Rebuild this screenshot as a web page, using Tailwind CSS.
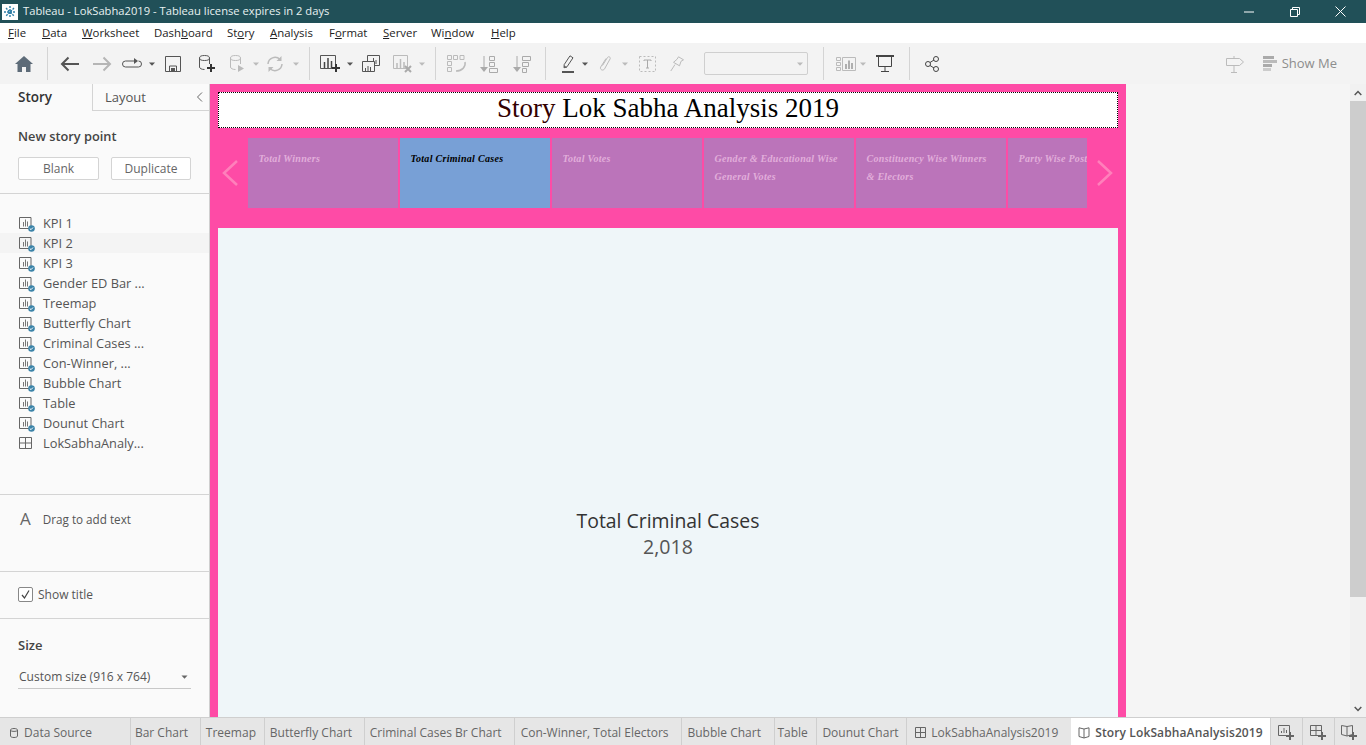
<!DOCTYPE html>
<html lang="en">
<head>
<meta charset="UTF-8" />
<title>Tableau - LokSabha2019</title>
<script src="https://cdn.jsdelivr.net/npm/@tailwindcss/browser@4"></script>
</head>
<body class="h-[745px] w-[1366px] overflow-hidden flex flex-col bg-white font-['Open_Sans',sans-serif] text-[#555]">

<!-- icons used more than once -->
<svg class="hidden">
  <symbol id="sheet" viewBox="0 0 16 16">
    <path d="M.5 1.500h11.500v11H.5z" fill="none" stroke="#666"/>
    <path d="M4.500 6v4.500M6.500 3.500v7M8.500 5.500v5" stroke="#777" fill="none"/>
    <circle cx="12.500" cy="12.500" r="3.300" fill="#3b83a8"/>
    <path d="M10.800 12.500l1.200 1.200 2-2.200" stroke="#fff" fill="none"/>
  </symbol>
  <symbol id="caret" viewBox="0 0 6 4"><path d="M0 .5h6L3 3.800z" fill="currentColor"/></symbol>
  <symbol id="caret-off" viewBox="0 0 6 4"><path d="M0 .5h6L3 3.800z" fill="#bbb"/></symbol>
</svg>

<!-- title bar -->
<div class="h-[23px] shrink-0 bg-[#215058] flex items-center text-white text-[11.2px]">
  <svg class="ml-[2px] w-[16px] h-[16px]" viewBox="0 0 16 16">
    <rect width="16" height="16" fill="#fff"/>
    <path d="M8 2v12M2 8h12M4 4l8 8M12 4l-8 8" stroke="#2f7fa8" stroke-width="1.400" stroke-dasharray="2 1"/>
  </svg>
  <span class="ml-[5px] text-[#e8f0f1]">Tableau - LokSabha2019 - Tableau license expires in 2 days</span>
  <div class="ml-auto flex items-center">
    <svg class="w-[10px] h-[10px] mr-[36px]" viewBox="0 0 10 10"><path d="M0 5h10" stroke="#fff"/></svg>
    <svg class="w-[10px] h-[10px] mr-[35px]" viewBox="0 0 10 10"><path d="M.5 2.500h7v7h-7zM2.500 2.500v-2h7v7h-2" fill="none" stroke="#fff"/></svg>
    <svg class="w-[11px] h-[11px] mr-[20px]" viewBox="0 0 11 11"><path d="M.5.500l10 10M10.500.500l-10 10" stroke="#fff"/></svg>
  </div>
</div>

<!-- menu bar -->
<div class="h-[20px] shrink-0 bg-white flex items-center pl-[8px] text-[11.4px] text-[#222]">
  <span class="w-[34px]"><u>F</u>ile</span>
  <span class="w-[40px]"><u>D</u>ata</span>
  <span class="w-[72px]"><u>W</u>orksheet</span>
  <span class="w-[73px]">Dash<u>b</u>oard</span>
  <span class="w-[43px]">St<u>o</u>ry</span>
  <span class="w-[59px]"><u>A</u>nalysis</span>
  <span class="w-[54px]">F<u>o</u>rmat</span>
  <span class="w-[48px]"><u>S</u>erver</span>
  <span class="w-[60px]">Wi<u>n</u>dow</span>
  <span><u>H</u>elp</span>
</div>

<!-- toolbar -->
<div class="h-[41px] shrink-0 bg-[#f3f3f3] flex items-center text-[#555]">
  <div class="w-[47px] flex justify-center">
    <svg class="w-[18px] h-[16px]" viewBox="0 0 18 16"><path d="M9 0L0 8h2.500v8h4.500v-5h4v5h4.500V8H18z" fill="#5d6b78"/></svg>
  </div>
  <div class="w-px h-[33px] bg-[#d4d4d4]"></div>
  <svg class="ml-[12px] w-[20px] h-[16px]" viewBox="0 0 20 16"><path d="M19 8H2M8.500 1.500L2 8l6.500 6.500" fill="none" stroke="#555" stroke-width="2"/></svg>
  <svg class="ml-[12px] w-[20px] h-[16px]" viewBox="0 0 20 16"><path d="M1 8h17M11.500 1.500L18 8l-6.500 6.500" fill="none" stroke="#b5b5b5" stroke-width="2"/></svg>
  <svg class="ml-[10px] w-[20px] h-[12px]" viewBox="0 0 20 12"><path d="M13 3H3.500a2.500 2.500 0 000 6h13a2.500 2.500 0 000-6" fill="none" stroke="#555"/><path d="M12 0l4 3-4 3z" fill="#555"/></svg>
  <svg class="ml-[7px] w-[6px] h-[4px]"><use href="#caret"/></svg>
  <svg class="ml-[10px] w-[16px] h-[16px]" viewBox="0 0 16 16"><path d="M.5.500h15v15H.5zM4.500 15.500V10h7v5.500" fill="none" stroke="#555"/><path d="M6 12h4v3H6z" fill="#555"/></svg>
  <svg class="ml-[17px] w-[18px] h-[18px]" viewBox="0 0 18 18"><ellipse cx="6.500" cy="3" rx="5" ry="2.500" fill="none" stroke="#555"/><path d="M1.500 3v9c0 1.400 2 2.500 5 2.500M11.500 3v6" fill="none" stroke="#555"/><path d="M13 9v8M9 13h8" stroke="#333" stroke-width="2"/></svg>
  <svg class="ml-[13px] w-[16px] h-[18px]" viewBox="0 0 16 18"><ellipse cx="6.500" cy="3" rx="5" ry="2.500" fill="none" stroke="#bbb"/><path d="M1.500 3v9c0 1.400 2 2.500 5 2.500M11.500 3v6" fill="none" stroke="#bbb"/><path d="M9 10l6 3.500L9 17z" fill="#bbb"/></svg>
  <svg class="ml-[8px] w-[6px] h-[4px]"><use href="#caret-off"/></svg>
  <svg class="ml-[7px] w-[18px] h-[16px]" viewBox="0 0 18 16"><path d="M2 8a7 7 0 0112-4.500M16 8a7 7 0 01-12 4.500" fill="none" stroke="#bbb" stroke-width="1.500"/><path d="M15.500 0v5h-5zM2.500 16v-5h5z" fill="#bbb"/></svg>
  <svg class="ml-[9px] w-[6px] h-[4px]"><use href="#caret-off"/></svg>
  <div class="ml-[10px] w-px h-[33px] bg-[#d4d4d4]"></div>
  <svg class="ml-[10px] w-[22px] h-[20px]" viewBox="0 0 22 20"><path d="M.5 1.500h15v13H.5z" fill="none" stroke="#555"/><path d="M4.500 8v6M8 4v10M11.500 7v7" stroke="#444" stroke-width="1.500"/><path d="M16 10v8M12 14h8" stroke="#333" stroke-width="2"/></svg>
  <svg class="ml-[5px] w-[6px] h-[4px]"><use href="#caret"/></svg>
  <svg class="ml-[9px] w-[18px] h-[17px]" viewBox="0 0 18 17"><path d="M5.500 .5h12v10h-12z" fill="#f3f3f3" stroke="#555"/><path d="M9 7v2M11.500 3v6M14 5v4" stroke="#555"/><path d="M.5 6.500h12v10H.5z" fill="#f3f3f3" stroke="#555"/><path d="M3.500 13v3M6 11v5M8.500 12v4" stroke="#555"/></svg>
  <svg class="ml-[13px] w-[20px] h-[18px]" viewBox="0 0 20 18"><path d="M.5 .5h14v13H.5z" fill="none" stroke="#bbb"/><path d="M4 8v5M7.500 4v9M11 7v6" stroke="#bbb" stroke-width="1.500"/><path d="M12 11l6 6M18 11l-6 6" stroke="#aaa" stroke-width="2"/></svg>
  <svg class="ml-[6px] w-[6px] h-[4px]"><use href="#caret-off"/></svg>
  <div class="ml-[10px] w-px h-[33px] bg-[#d4d4d4]"></div>
  <svg class="ml-[11px] w-[20px] h-[18px]" viewBox="0 0 20 18"><path d="M.5.500h4v4h-4zM6.500.500h4v4h-4zM.5 6.500h4v4h-4zM.5 12.500h4v4h-4zM13 .5h4v4h-4z" fill="none" stroke="#bbb"/><path d="M18 7c1 5-3 9-9 9" fill="none" stroke="#bbb" stroke-width="1.500"/></svg>
  <svg class="ml-[13px] w-[18px] h-[18px]" viewBox="0 0 18 18"><path d="M4 1v14" stroke="#aaa"/><path d="M0 12l4 5 4-5z" fill="#aaa"/><path d="M9.500 1.500h5v4h-5zM9.500 7.500h5v4h-5zM9.500 13.500h8v4h-8z" fill="none" stroke="#aaa"/></svg>
  <svg class="ml-[15px] w-[18px] h-[18px]" viewBox="0 0 18 18"><path d="M4 1v14" stroke="#aaa"/><path d="M0 12l4 5 4-5z" fill="#aaa"/><path d="M9.500 1.500h8v4h-8zM9.500 7.500h6v4h-6zM9.500 13.500h4v4h-4z" fill="none" stroke="#aaa"/></svg>
  <div class="ml-[14px] w-px h-[33px] bg-[#d4d4d4]"></div>
  <svg class="ml-[16px] w-[12px] h-[18px]" viewBox="0 0 12 18"><path d="M8 .8l3 2-6 9-3 1 .2-3.200zM2 11l2.500 1.500" fill="none" stroke="#555"/><path d="M0 16h12v2H0z" fill="#555"/></svg>
  <svg class="ml-[8px] w-[6px] h-[4px]"><use href="#caret"/></svg>
  <svg class="ml-[10px] w-[14px] h-[18px]" viewBox="0 0 14 18"><path d="M4.500 10.500l5-8c1-1.600 3.500-.3 2.600 1.400L6.500 14c-1.500 2.300-5 .6-3.800-2L8 3.500" fill="none" stroke="#bbb"/></svg>
  <svg class="ml-[10px] w-[6px] h-[4px]"><use href="#caret-off"/></svg>
  <svg class="ml-[11px] w-[17px] h-[16px]" viewBox="0 0 17 16"><path d="M.5.500h16v15H.5z" fill="none" stroke="#bbb" stroke-dasharray="2 2"/><path d="M5 5V4h7v1M8.500 4v8M7 12h3" fill="none" stroke="#aaa"/></svg>
  <svg class="ml-[14px] w-[14px] h-[16px]" viewBox="0 0 14 16"><path d="M8.500.8l5 3-2.500 1.500-1.500 4.500-6-3.500 3.500-3zM5 8.500L.8 15" fill="none" stroke="#bbb"/></svg>
  <div class="ml-[20px] w-[104px] h-[23px] border border-[#cfcfcf] rounded-[2px] flex items-center justify-end pr-[3px]">
    <svg class="w-[6px] h-[4px] mr-[1px]"><use href="#caret-off"/></svg>
  </div>
  <div class="ml-[15px] w-px h-[33px] bg-[#d4d4d4]"></div>
  <svg class="ml-[12px] w-[20px] h-[14px]" viewBox="0 0 20 14"><path d="M.5.500h4v3h-4zM.5 5.500h4v3h-4zM.5 10.500h4v3h-4zM6.500.500h13v13h-13z" fill="none" stroke="#bbb"/><path d="M10 7v5M13 3.500V12M16 6v6" stroke="#999" stroke-width="1.500"/></svg>
  <svg class="ml-[4px] w-[6px] h-[4px]"><use href="#caret-off"/></svg>
  <svg class="ml-[10px] w-[18px] h-[17px]" viewBox="0 0 18 17"><path d="M0 1h18" stroke="#444" stroke-width="2"/><path d="M2.500 2v9.500h13V2M9 0v1M9 11.500V16M5 16.500h8" fill="none" stroke="#444"/></svg>
  <div class="ml-[15px] w-px h-[33px] bg-[#d4d4d4]"></div>
  <svg class="ml-[15px] w-[14px] h-[16px]" viewBox="0 0 14 16"><circle cx="3" cy="8" r="2.500" fill="none" stroke="#444"/><circle cx="11" cy="3" r="2.500" fill="none" stroke="#444"/><circle cx="11" cy="13" r="2.500" fill="none" stroke="#444"/><path d="M5 6.500l4-2.500M5 9.500l4 2.500" stroke="#444"/></svg>
  <svg class="ml-auto w-[18px] h-[18px]" viewBox="0 0 18 18"><path d="M.5 3.500h13l4 3.500-4 3.500H.5zM8 1v2.500M8 10.500V17M5 17.500h6" fill="none" stroke="#bbb"/></svg>
  <svg class="ml-[19px] w-[14px] h-[15px]" viewBox="0 0 14 15"><path d="M0 0h11v3H0z" fill="#aaa"/><path d="M0 4h14v3H0z" fill="#bbb"/><path d="M0 8h9v3H0z" fill="#aaa"/><path d="M0 12h8v3H0z" fill="#ccc"/></svg>
  <span class="ml-[5px] mr-[29px] text-[13px] text-[#8d8d8d]">Show Me</span>
</div>

<!-- main -->
<div class="flex-1 min-h-0 flex">

  <!-- left pane -->
  <aside class="w-[210px] shrink-0 bg-[#fafafa] border-r border-[#cfcfcf] flex flex-col text-[12.8px] text-[#555]">
    <div class="h-[27px] shrink-0 flex">
      <div class="w-[92px] pl-[18px] pt-[3px] font-semibold text-[13.5px] text-[#333]">Story</div>
      <div class="flex-1 border-l border-b border-[#d4d4d4] pl-[12px] pt-[4px] flex justify-between text-[13px]">
        <span class="text-[#555]">Layout</span>
        <svg class="w-[7px] h-[10px] mr-[6px] mt-[4px]" viewBox="0 0 7 10"><path d="M6 .5L1.500 5 6 9.500" fill="none" stroke="#666"/></svg>
      </div>
    </div>
    <div class="h-[83px] shrink-0 border-b border-[#d4d4d4] px-[18px] pt-[16px]">
      <div class="font-semibold text-[12.8px] text-[#444] leading-[18px]">New story point</div>
      <div class="mt-[12px] flex justify-between">
        <div class="w-[81px] h-[23px] bg-white border border-[#d4d4d4] rounded-[2px] flex items-center justify-center text-[12px] text-[#666]">Blank</div>
        <div class="w-[80px] h-[23px] bg-white border border-[#d4d4d4] rounded-[2px] flex items-center justify-center text-[12px] text-[#666]">Duplicate</div>
      </div>
    </div>
    <div class="h-[301px] shrink-0 border-b border-[#d4d4d4] pt-[19px]">
      <div class="h-[20px] pl-[19px] pt-[2px] flex items-center gap-[8px]"><svg class="w-[16px] h-[16px]"><use href="#sheet"/></svg>KPI 1</div>
      <div class="h-[20px] pl-[19px] pt-[2px] flex items-center gap-[8px] bg-[#f4f4f4]"><svg class="w-[16px] h-[16px]"><use href="#sheet"/></svg>KPI 2</div>
      <div class="h-[20px] pl-[19px] pt-[2px] flex items-center gap-[8px]"><svg class="w-[16px] h-[16px]"><use href="#sheet"/></svg>KPI 3</div>
      <div class="h-[20px] pl-[19px] pt-[2px] flex items-center gap-[8px]"><svg class="w-[16px] h-[16px]"><use href="#sheet"/></svg>Gender ED Bar ...</div>
      <div class="h-[20px] pl-[19px] pt-[2px] flex items-center gap-[8px]"><svg class="w-[16px] h-[16px]"><use href="#sheet"/></svg>Treemap</div>
      <div class="h-[20px] pl-[19px] pt-[2px] flex items-center gap-[8px]"><svg class="w-[16px] h-[16px]"><use href="#sheet"/></svg>Butterfly Chart</div>
      <div class="h-[20px] pl-[19px] pt-[2px] flex items-center gap-[8px]"><svg class="w-[16px] h-[16px]"><use href="#sheet"/></svg>Criminal Cases ...</div>
      <div class="h-[20px] pl-[19px] pt-[2px] flex items-center gap-[8px]"><svg class="w-[16px] h-[16px]"><use href="#sheet"/></svg>Con-Winner, ...</div>
      <div class="h-[20px] pl-[19px] pt-[2px] flex items-center gap-[8px]"><svg class="w-[16px] h-[16px]"><use href="#sheet"/></svg>Bubble Chart</div>
      <div class="h-[20px] pl-[19px] pt-[2px] flex items-center gap-[8px]"><svg class="w-[16px] h-[16px]"><use href="#sheet"/></svg>Table</div>
      <div class="h-[20px] pl-[19px] pt-[2px] flex items-center gap-[8px]"><svg class="w-[16px] h-[16px]"><use href="#sheet"/></svg>Dounut Chart</div>
      <div class="h-[20px] pl-[19px] pt-[2px] flex items-center gap-[8px]">
        <svg class="w-[16px] h-[16px]" viewBox="0 0 16 16"><path d="M.5 1.500h12v11H.5zM6.500 1.500v11M.5 7h12" fill="none" stroke="#666"/></svg>LokSabhaAnaly...
      </div>
    </div>
    <div class="h-[77px] shrink-0 border-b border-[#d4d4d4] pl-[20px] pt-[14px] flex items-start gap-[12px] text-[11.7px]">
      <span class="text-[17px] leading-[20px] text-[#666]">A</span><span class="leading-[20px]">Drag to add text</span>
    </div>
    <div class="h-[47px] shrink-0 border-b border-[#d4d4d4] pl-[18px] pt-[15px] flex items-start gap-[5px] text-[12px]">
      <div class="w-[15px] h-[15px] bg-white border border-[#888] rounded-[2px] flex items-center justify-center">
        <svg class="w-[9px] h-[9px]" viewBox="0 0 9 9"><path d="M1 5l2.500 3L8 .5" fill="none" stroke="#444" stroke-width="1.200"/></svg>
      </div>
      <span class="leading-[15px]">Show title</span>
    </div>
    <div class="flex-1 px-[18px] pt-[16px]">
      <div class="font-semibold text-[13px] text-[#444] leading-[20px]">Size</div>
      <div class="mt-[11px] h-[23px] border-b border-[#c8c8c8] flex items-center justify-between pr-[3px] text-[12px] pl-[1px]">
        <span>Custom size (916 x 764)</span>
        <svg class="w-[7px] h-[4px] text-[#666]"><use href="#caret"/></svg>
      </div>
    </div>
  </aside>

  <!-- story canvas -->
  <main class="w-[916px] shrink-0 bg-[#fe4ba6] px-[8px] pt-[8px] flex flex-col">
    <div class="h-[36px] shrink-0 bg-white border border-dotted border-black flex items-center justify-center pb-[3px] font-['Liberation_Serif',serif] text-[27px] leading-none text-black"><span><span class="text-[#300]">Story</span> Lok Sabha Analysis 2019</span></div>
    <div class="h-[70px] mt-[10px] shrink-0 flex items-center">
      <div class="w-[30px] pr-[6px] flex justify-center">
        <svg class="w-[16px] h-[26px]" viewBox="0 0 16 26"><path d="M15 1L2 13l13 12" fill="none" stroke="#ff80bb" stroke-width="2.500"/></svg>
      </div>
      <div class="w-[839px] h-[70px] overflow-hidden flex gap-[2px] font-['Liberation_Serif',serif] text-[10px] font-bold italic leading-[18px] tracking-[0.3px] text-[#e2aedb]">
        <div class="w-[150px] shrink-0 bg-[#bb74ba] pl-[10.5px] pt-[12px]">Total Winners</div>
        <div class="w-[150px] shrink-0 bg-[#78a0d6] pl-[10.5px] pt-[12px] text-black">Total Criminal Cases</div>
        <div class="w-[150px] shrink-0 bg-[#bb74ba] pl-[10.5px] pt-[12px]">Total Votes</div>
        <div class="w-[150px] shrink-0 bg-[#bb74ba] pl-[10.5px] pr-[10px] pt-[12px]">Gender &amp; Educational Wise General Votes</div>
        <div class="w-[150px] shrink-0 bg-[#bb74ba] pl-[10.5px] pr-[14px] pt-[12px]">Constituency Wise Winners &amp; Electors</div>
        <div class="w-[150px] shrink-0 bg-[#bb74ba] pl-[10.5px] pt-[12px] whitespace-nowrap">Party Wise Postal Votes</div>
      </div>
      <div class="flex-1 pl-[5px] flex justify-center">
        <svg class="w-[16px] h-[26px]" viewBox="0 0 16 26"><path d="M1 1l13 12L1 25" fill="none" stroke="#ff80bb" stroke-width="2.500"/></svg>
      </div>
    </div>
    <div class="flex-1 mt-[20px] bg-[#eff6f9] flex flex-col items-center pt-[280px] text-[#333]">
      <div class="text-[19.4px] leading-[26px] font-medium">Total Criminal Cases</div>
      <div class="text-[19.6px] leading-[26px] text-[#555]">2,018</div>
    </div>
  </main>

  <div class="flex-1 bg-[#f5f5f5]"></div>

  <!-- scrollbar -->
  <div class="w-[16px] shrink-0 bg-[#f1f1f1] flex flex-col">
    <div class="h-[17px] flex items-center justify-center">
      <svg class="w-[8px] h-[6px]" viewBox="0 0 8 6"><path d="M.7 5L4 1.500 7.300 5" fill="none" stroke="#555" stroke-width="1.500"/></svg>
    </div>
    <div class="h-[496px] bg-[#cdcdcd]"></div>
    <div class="mt-auto h-[17px] flex items-center justify-center">
      <svg class="w-[8px] h-[6px]" viewBox="0 0 8 6"><path d="M.7 1L4 4.500 7.300 1" fill="none" stroke="#555" stroke-width="1.500"/></svg>
    </div>
  </div>
</div>

<!-- sheet tabs -->
<div class="h-[28px] shrink-0 bg-[#e6e6e6] border-t border-[#cfcfcf] flex text-[12px] text-[#666]">
  <div class="w-[131px] border-r border-[#cfcfcf] flex items-center pl-[10px] pt-[2px] gap-[6px]">
    <svg class="w-[8px] h-[10px]" viewBox="0 0 8 10"><path d="M.5 2c0-2 7-2 7 0v6c0 2-7 2-7 0zM.5 2.500c1 1.200 6 1.200 7 0" fill="none" stroke="#666"/></svg>
    Data Source
  </div>
  <div class="w-[70px] border-r border-[#cfcfcf] flex items-center pl-[4px] pt-[2px]">Bar Chart</div>
  <div class="w-[64px] border-r border-[#cfcfcf] flex items-center pl-[5px] pt-[2px]">Treemap</div>
  <div class="w-[100px] border-r border-[#cfcfcf] flex items-center pl-[5px] pt-[2px]">Butterfly Chart</div>
  <div class="w-[150px] border-r border-[#cfcfcf] flex items-center pl-[5px] pt-[2px]">Criminal Cases Br Chart</div>
  <div class="w-[167px] border-r border-[#cfcfcf] flex items-center pl-[6px] pt-[2px]">Con-Winner, Total Electors</div>
  <div class="w-[94px] border-r border-[#cfcfcf] flex items-center pl-[6px] pt-[2px]">Bubble Chart</div>
  <div class="w-[42px] border-r border-[#cfcfcf] flex items-center pl-[2px] pt-[2px]">Table</div>
  <div class="w-[90px] border-r border-[#cfcfcf] flex items-center pl-[5px] pt-[2px]">Dounut Chart</div>
  <div class="w-[164px] flex items-center pl-[8px] pt-[2px] gap-[5px]">
    <svg class="w-[11px] h-[11px]" viewBox="0 0 11 11"><path d="M.5.500h10v10H.5zM5.500.500v10M.5 5.500h10" fill="none" stroke="#666"/></svg>
    LokSabhaAnalysis2019
  </div>
  <div class="w-[199px] bg-white flex items-center pl-[7px] pt-[2px] gap-[5px] font-semibold tracking-[0.12px] text-[#555]">
    <svg class="w-[12px] h-[12px]" viewBox="0 0 12 12"><path d="M6 2L1 .8v8.700L6 11l5-1.500V.8zM6 2v9" fill="none" stroke="#666"/></svg>
    Story LokSabhaAnalysis2019
  </div>
  <div class="w-[32px] border-l border-[#cfcfcf] flex items-center justify-center">
    <svg class="w-[18px] h-[16px]" viewBox="0 0 18 16"><path d="M.5 1.500h11v10H.5zM3.500 9V7M6 9V4M8.500 9V6" fill="none" stroke="#666"/><path d="M12 8v8M8 12h8" stroke="#666" stroke-width="2"/></svg>
  </div>
  <div class="w-[32px] border-l border-[#cfcfcf] flex items-center justify-center">
    <svg class="w-[18px] h-[16px]" viewBox="0 0 18 16"><path d="M.5 1.500h11v10H.5zM6 1.500v10M.5 6.500h11" fill="none" stroke="#666"/><path d="M12 8v8M8 12h8" stroke="#666" stroke-width="2"/></svg>
  </div>
  <div class="w-[32px] border-l border-[#cfcfcf] flex items-center justify-center">
    <svg class="w-[18px] h-[16px]" viewBox="0 0 18 16"><path d="M6 2.500L.5 1.500v9L6 12l5.500-1.500v-9zM6 2.500V12" fill="none" stroke="#666"/><path d="M12 8v8M8 12h8" stroke="#666" stroke-width="2"/></svg>
  </div>
</div>

</body>
</html>
